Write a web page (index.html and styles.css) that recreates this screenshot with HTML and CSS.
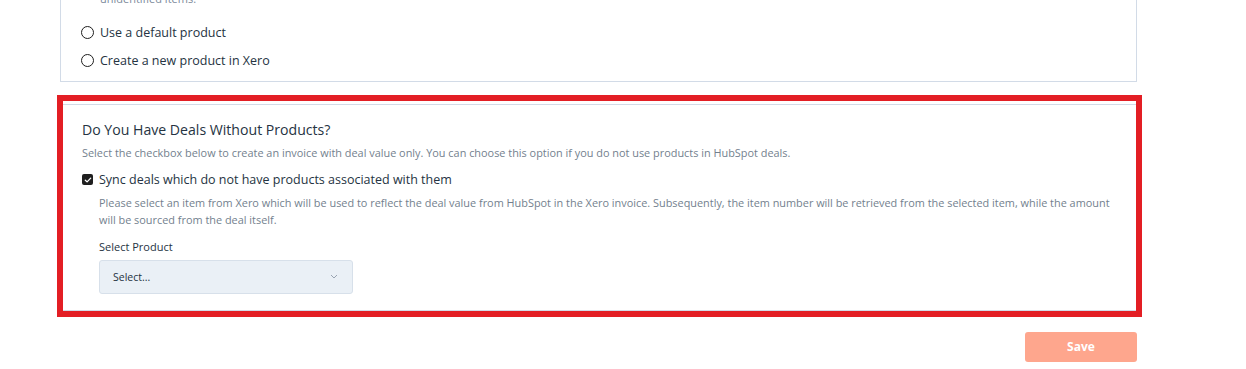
FILE: index.html
```html
<!DOCTYPE html>
<html>
<head>
<meta charset="utf-8">
<link rel="stylesheet" href="styles.css">
</head>
<body>
<div class="page">
  <div class="card card-top">
    <p class="cut-text">unidentified items.</p>
    <label class="radio-row"><span class="radio"></span><span class="opt-label">Use a default product</span></label>
    <label class="radio-row"><span class="radio"></span><span class="opt-label">Create a new product in Xero</span></label>
  </div>

  <div class="card card-deals">
    <h3 class="title">Do You Have Deals Without Products?</h3>
    <p class="desc">Select the checkbox below to create an invoice with deal value only. You can choose this option if you do not use products in HubSpot deals.</p>
    <label class="check-row">
      <span class="checkbox"><svg width="8" height="8" viewBox="0 0 8 8"><path d="M1.3 4.2 L3.1 5.9 L6.7 2.1" fill="none" stroke="#fff" stroke-width="1.3" stroke-linecap="round" stroke-linejoin="round"/></svg></span>
      <span class="opt-label">Sync deals which do not have products associated with them</span>
    </label>
    <div class="nested">
      <p class="desc para">Please select an item from Xero which will be used to reflect the deal value from HubSpot in the Xero invoice. Subsequently, the item number will be retrieved from the selected item, while the amount will be sourced from the deal itself.</p>
      <div class="field-label">Select Product</div>
      <div class="select">
        <span>Select...</span>
        <svg width="8" height="5" viewBox="0 0 8 5"><path d="M1 1 L4 4 L7 1" fill="none" stroke="#99a4b2" stroke-width="1"/></svg>
      </div>
    </div>
    <div class="highlight"></div>
  </div>

  <div class="actions">
    <button class="save">Save</button>
  </div>
</div>
</body>
</html>
```
FILE: styles.css
```css
* { box-sizing: border-box; }
html, body { margin: 0; padding: 0; background: #fff; }
body {
  font-family: "Open Sans", "Noto Sans", sans-serif;
  color: #253342;
  width: 1246px;
  height: 369px;
  overflow: hidden;
}
.page {
  margin-left: 60px;
  width: 1077px;
  display: flex;
  flex-direction: column;
}
.card {
  border: 1px solid #d2dbe7;
  background: #fff;
}
.card-top {
  border-top: none;
  margin-top: -8px;
  padding: 0 20px 11.5px 20px;
  display: flex;
  flex-direction: column;
  gap: 9px;
}
.cut-text {
  margin: 0 0 7.5px 19px;
  font-size: 11px;
  line-height: 14px;
  color: #7c8a9b;
}
.radio-row {
  display: flex;
  align-items: center;
  gap: 6px;
  height: 19px;
}
.radio {
  width: 13px;
  height: 13px;
  border: 1.3px solid #1e1e1e;
  border-radius: 50%;
}
.opt-label {
  font-size: 12.5px;
  color: #253342;
}
.card-deals {
  position: relative;
  margin-top: 22px;
  padding: 15px 21px 16px 21px;
}
.title {
  margin: 0;
  font-size: 14.1px;
  font-weight: 400;
  color: #253342;
  line-height: 20px;
}
.desc {
  margin: 4px 0 0;
  font-size: 10.9px;
  line-height: 17px;
  color: #737f8e;
}
.check-row {
  display: flex;
  align-items: center;
  gap: 6px;
  margin-top: 9px;
  height: 19px;
}
.checkbox {
  width: 11px;
  height: 11px;
  border-radius: 2px;
  background: #1f1f1f;
  display: flex;
  align-items: center;
  justify-content: center;
}
.nested {
  padding-left: 17px;
}
.para {
  margin-top: 5px;
  width: 1014px;
}
.field-label {
  margin-top: 12px;
  font-size: 11px;
  color: #253342;
  line-height: 14px;
}
.select {
  margin-top: 5.5px;
  width: 254px;
  height: 34px;
  background: #eaf0f6;
  border: 1px solid #d7e0ea;
  border-radius: 3px;
  display: flex;
  align-items: center;
  justify-content: space-between;
  padding: 0 14px 0 13px;
  font-size: 10.5px;
  color: #253342;
}
.highlight {
  position: absolute;
  left: -4px;
  top: -10px;
  right: -6px;
  bottom: -7px;
  border: 6px solid #e31e24;
  pointer-events: none;
}
.actions {
  display: flex;
  justify-content: flex-end;
  margin-top: 21px;
}
.save {
  width: 112px;
  height: 30px;
  border: none;
  border-radius: 3px;
  background: #fea68d;
  color: #fff;
  font-family: inherit;
  font-weight: 700;
  font-size: 12px;
}
```
